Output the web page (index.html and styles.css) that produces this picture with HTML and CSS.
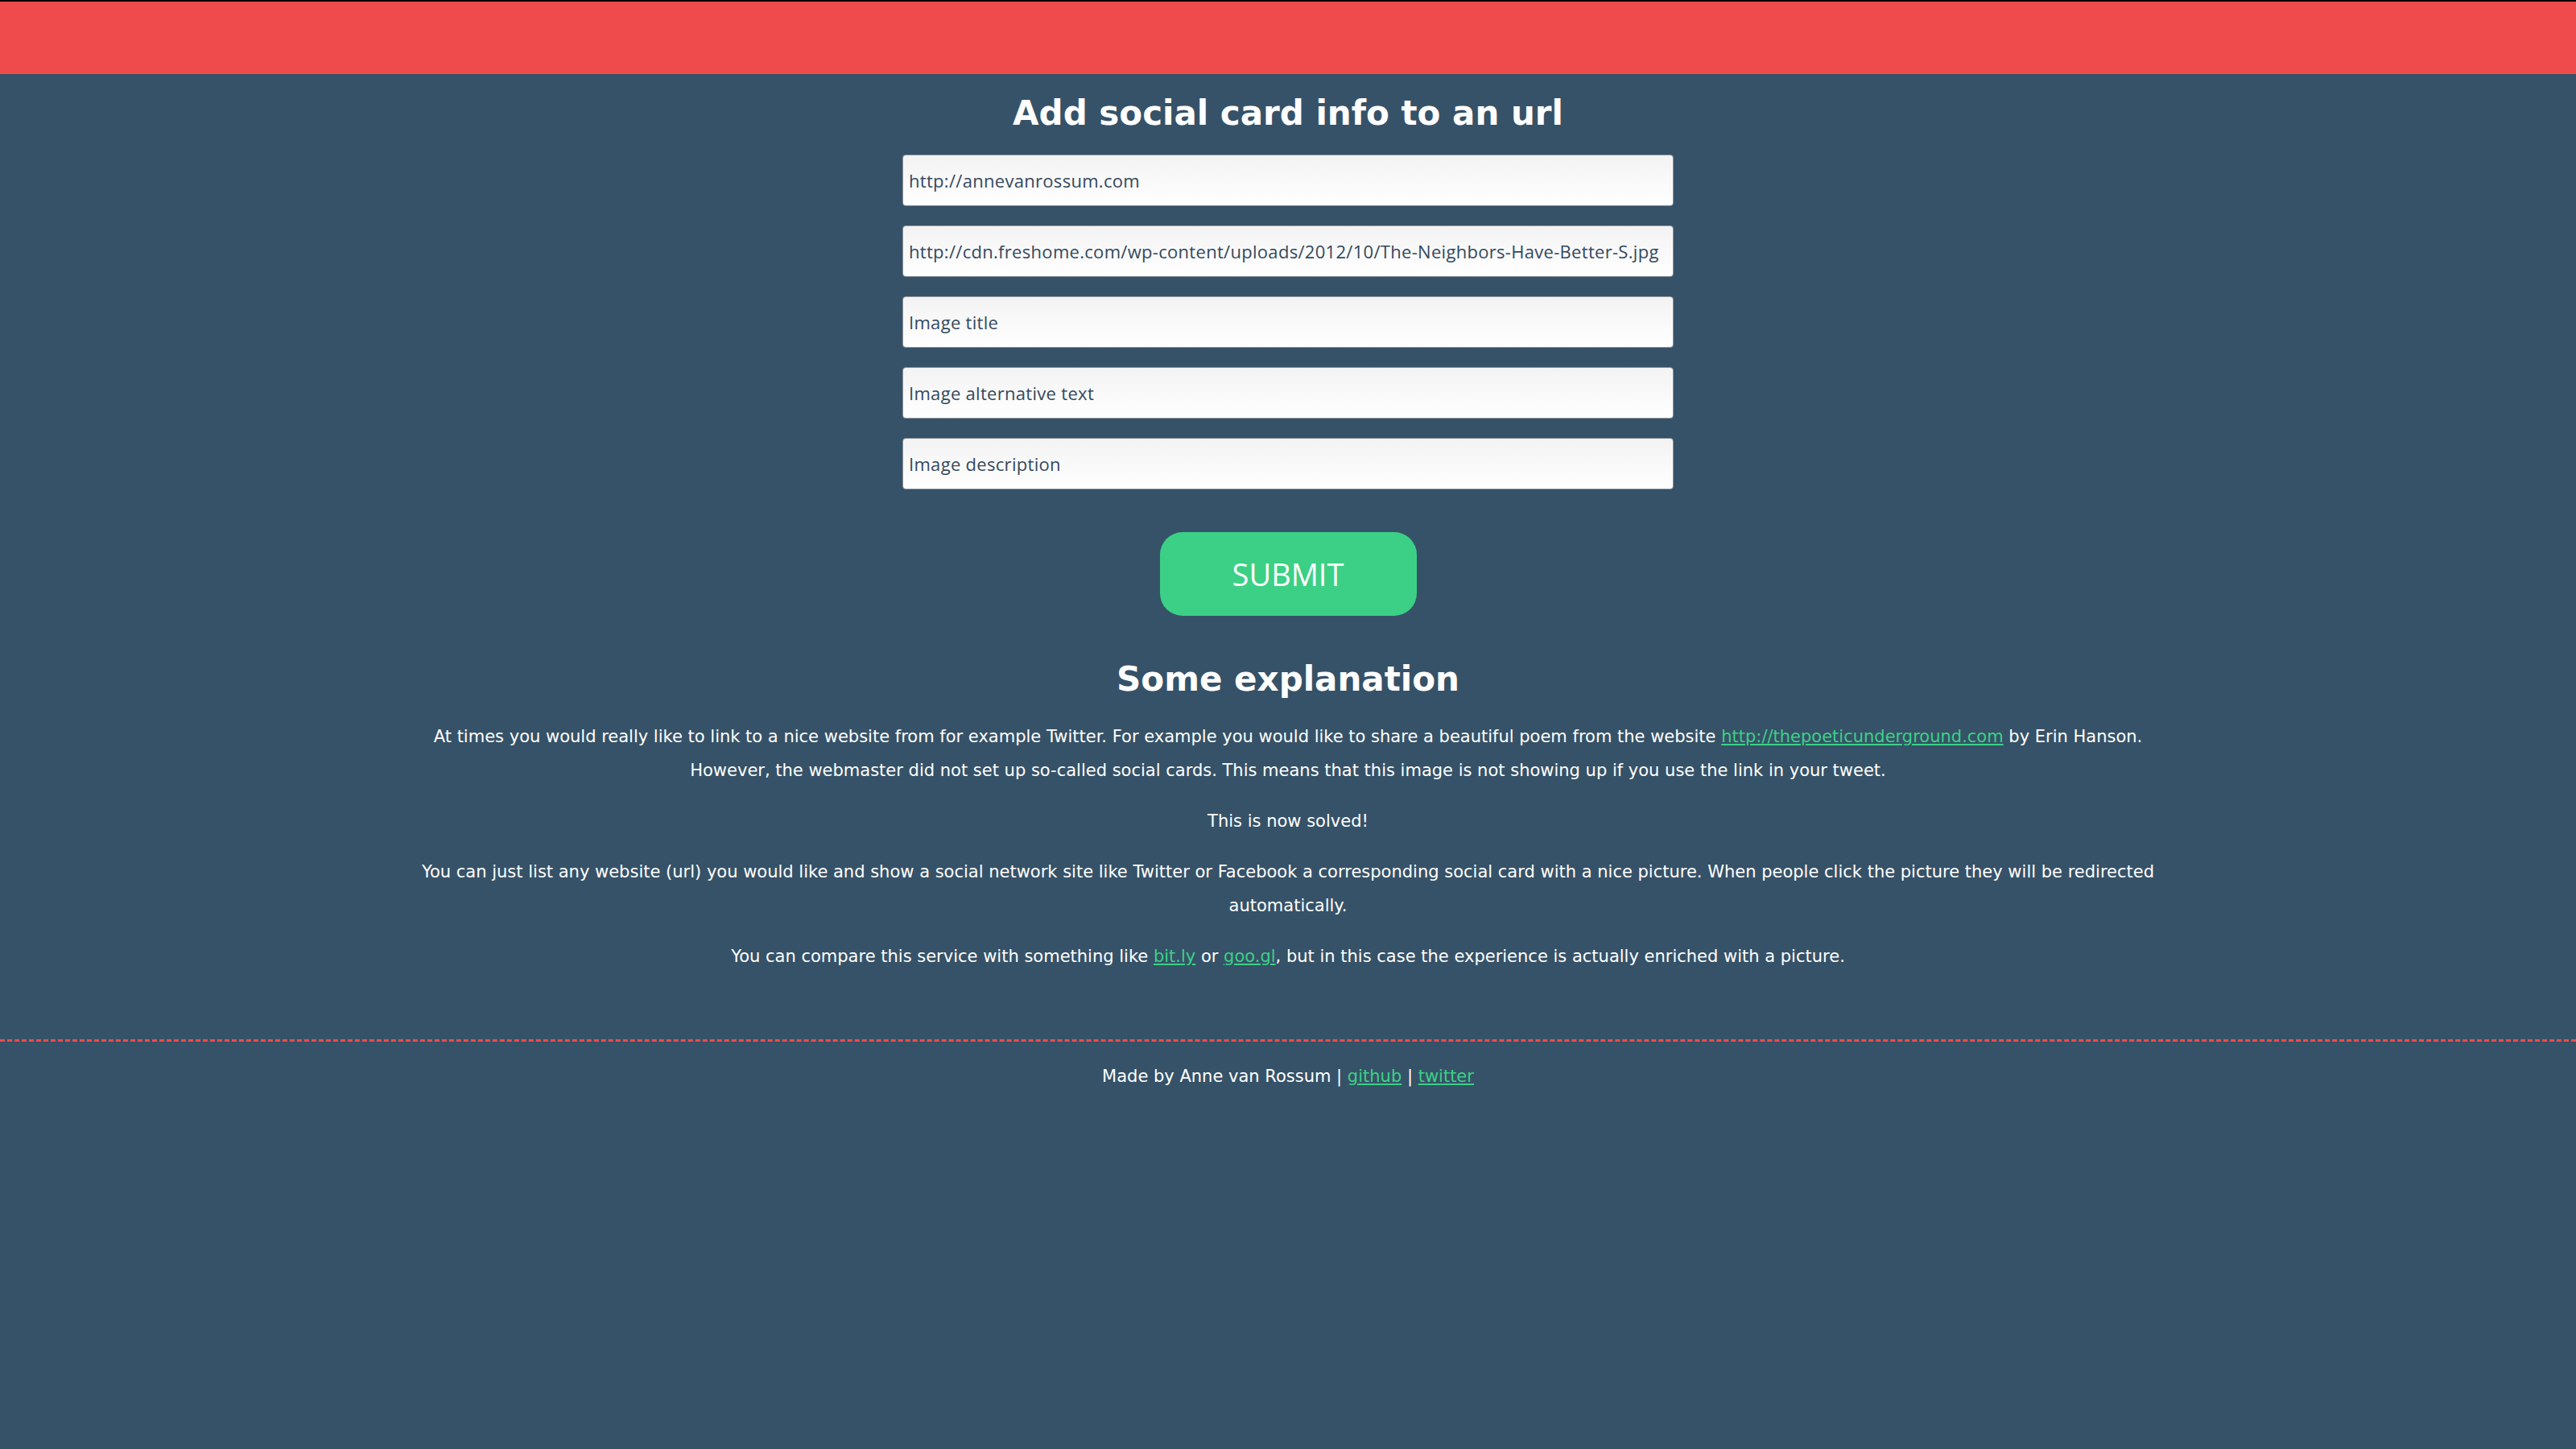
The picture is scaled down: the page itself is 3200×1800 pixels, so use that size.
FILE: index.html
```html
<!DOCTYPE html>
<html lang="en">
<head>
<meta charset="utf-8">
<title>Social card</title>
<link rel="stylesheet" href="styles.css">
</head>
<body>
<header class="topbar"></header>
<main class="content">
  <h1 class="title">Add social card info to an url</h1>
  <form class="card-form">
    <input class="field" type="text" value="http://annevanrossum.com">
    <input class="field" type="text" value="http://cdn.freshome.com/wp-content/uploads/2012/10/The-Neighbors-Have-Better-S.jpg">
    <input class="field" type="text" placeholder="Image title">
    <input class="field" type="text" placeholder="Image alternative text">
    <input class="field" type="text" placeholder="Image description">
    <button class="submit" type="button">SUBMIT</button>
  </form>
  <h2 class="subtitle">Some explanation</h2>
  <p class="text">At times you would really like to link to a nice website from for example Twitter. For example you would like to share a beautiful poem from the website <a href="#">http://thepoeticunderground.com</a> by Erin Hanson. However, the webmaster did not set up so-called social cards. This means that this image is not showing up if you use the link in your tweet.</p>
  <p class="text">This is now solved!</p>
  <p class="text">You can just list any website (url) you would like and show a social network site like Twitter or Facebook a corresponding social card with a nice picture. When people click the picture they will be redirected automatically.</p>
  <p class="text">You can compare this service with something like <a href="#">bit.ly</a> or <a href="#">goo.gl</a>, but in this case the experience is actually enriched with a picture.</p>
</main>
<footer class="footer">Made by Anne van Rossum | <a href="#">github</a> | <a href="#">twitter</a></footer>
</body>
</html>
```
FILE: styles.css
```css
html, body {
  margin: 0;
  padding: 0;
}
body {
  background: #365268;
  color: #ffffff;
  font-family: "DejaVu Sans", sans-serif;
  font-size: 21px;
  min-height: 1800px;
}
.topbar {
  height: 90px;
  background: #f04b4c;
  border-top: 2px solid #000;
}
.content {
  width: 2200px;
  margin: 0 auto;
  text-align: center;
  padding-bottom: 82px;
}
.title {
  font-size: 42px;
  line-height: 50px;
  font-weight: bold;
  margin: 24px 0 26px;
}
.card-form {
  width: 958px;
  margin: 0 auto;
  display: flex;
  flex-direction: column;
  align-items: center;
  gap: 24px;
}
.field {
  width: 100%;
  height: 64px;
  box-sizing: border-box;
  border: 1px solid #8a9096;
  border-radius: 4px;
  background: linear-gradient(#f3f3f3, #ffffff);
  padding: 0 7px;
  font-family: "Open Sans", sans-serif;
  font-size: 22px;
  letter-spacing: 0.3px;
  color: #34495e;
  outline: none;
}
.field::placeholder {
  color: #34495e;
  opacity: 1;
}
.submit {
  margin-top: 29px;
  width: 319px;
  height: 104px;
  border: none;
  border-radius: 28px;
  background: #3bd085;
  color: #ffffff;
  font-family: "Open Sans", sans-serif;
  font-size: 38px;
  cursor: pointer;
}
.subtitle {
  font-size: 42px;
  line-height: 50px;
  font-weight: bold;
  margin: 54px 0 25px;
}
.text {
  margin: 0 0 21px;
  line-height: 42px;
}
.text:last-child {
  margin-bottom: 0;
}
a {
  color: #3cd086;
  text-decoration: underline;
}
.footer {
  border-top: 3px dashed #f04b4c;
  text-align: center;
  padding-top: 22px;
  line-height: 42px;
}
```
